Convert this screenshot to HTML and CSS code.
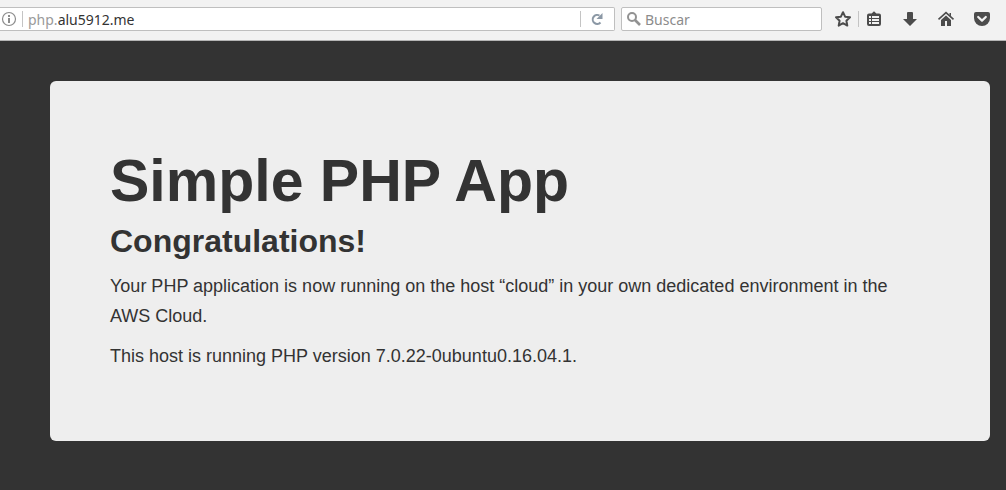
FILE: index.html
```html
<!DOCTYPE html>
<html lang="en">
<head>
<meta charset="utf-8">
<meta name="viewport" content="width=device-width, initial-scale=1">
<title>Simple PHP App</title>
<link rel="stylesheet" href="styles.css">
</head>
<body>
<header class="toolbar">
  <div class="field address">
    <button class="field-button" type="button" aria-label="Site information">
      <svg width="16" height="16" viewBox="0 0 16 16"><circle cx="8" cy="8" r="6.5" fill="none" stroke="#8c8c8c" stroke-width="1.2"/><path d="M7 4h2v2H7zM7 7h2v5H7z" fill="#8c8c8c"/></svg>
    </button>
    <span class="divider"></span>
    <label class="subdomain" for="url">php.</label>
    <input class="text-input url" id="url" type="text" value="alu5912.me">
    <span class="divider"></span>
    <button class="field-button reload" type="button" aria-label="Reload">
      <svg width="16" height="16" viewBox="0 0 16 16"><path d="M11.500 11.500A4.500 4.500 0 1 1 10.500 4.500" fill="none" stroke="#8b98a5" stroke-width="2"/><path d="M13.500 2v6H7.500z" fill="#8b98a5"/></svg>
    </button>
  </div>
  <div class="field search">
    <svg class="search-icon" width="16" height="16" viewBox="0 0 16 16"><circle cx="6" cy="6" r="4" fill="none" stroke="#929292" stroke-width="2"/><path d="M9 9l5 5" stroke="#929292" stroke-width="2.6"/></svg>
    <input class="text-input" type="search" placeholder="Buscar" aria-label="Buscar">
  </div>
  <nav class="actions" aria-label="Browser actions">
    <div class="bookmark-group">
      <button class="action" type="button" aria-label="Bookmark this page">
        <svg width="18" height="18" viewBox="0 0 18 18"><path d="M9 2.200l2.100 4.500 4.900.6-3.600 3.400.9 4.900L9 13.200l-4.300 2.400.9-4.900L2 7.300l4.900-.6z" fill="none" stroke="#4c4c4c" stroke-width="2" stroke-linejoin="round"/></svg>
      </button>
      <span class="divider"></span>
      <button class="action" type="button" aria-label="Show bookmarks">
        <svg width="18" height="18" viewBox="0 0 18 18"><path d="M4 3.4h2.6L9 1.2l2.4 2.2H14a2 2 0 0 1 2 2V14a2 2 0 0 1-2 2H4a2 2 0 0 1-2-2V5.400a2 2 0 0 1 2-2z" fill="#4c4c4c"/><path d="M4 6h2v2H4zM7 6h7v2H7zM4 9h2v2H4zM7 9h7v2H7zM4 12h2v2H4zM7 12h7v2H7z" fill="#f2f2f2"/></svg>
      </button>
    </div>
    <button class="action" type="button" aria-label="Downloads">
      <svg width="18" height="18" viewBox="0 0 18 18"><path d="M6 3q0-1 1-1h4q1 0 1 1v6h4l-7 7-7-7h4z" fill="#4c4c4c"/></svg>
    </button>
    <button class="action" type="button" aria-label="Home">
      <svg width="18" height="18" viewBox="0 0 18 18"><path d="M1.500 9.300L9 2.600l7.500 6.700" fill="none" stroke="#4c4c4c" stroke-width="1.600"/><path d="M12.500 3H14v3.400l-1.500-1.300zM4 10l5-4.500 5 4.500v6h-4v-5H8v5H4z" fill="#4c4c4c"/></svg>
    </button>
    <button class="action" type="button" aria-label="Save to Pocket">
      <svg width="18" height="18" viewBox="0 0 18 18"><path d="M3 2h12q2 0 2 2v4a8 8 0 0 1-16 0V4q0-2 2-2z" fill="#4c4c4c"/><path d="M5.200 7L9 10.600 12.800 7" fill="none" stroke="#f2f2f2" stroke-width="2.200" stroke-linecap="round" stroke-linejoin="round"/></svg>
    </button>
  </nav>
</header>
<main class="page">
  <section class="hero">
    <h1 class="title">Simple PHP App</h1>
    <h2 class="subtitle">Congratulations!</h2>
    <p class="copy">Your PHP application is now running on the host “cloud” in your own dedicated environment in the AWS Cloud.</p>
    <p class="copy">This host is running PHP version 7.0.22-0ubuntu0.16.04.1.</p>
  </section>
</main>
</body>
</html>
```
FILE: styles.css
```css
* {
  box-sizing: border-box;
}

body {
  margin: 0;
  min-height: 100vh;
  background: #333;
  color: #333;
  font-family: "Liberation Sans", Arial, sans-serif;
}

button,
input {
  margin: 0;
  padding: 0;
  border: 0;
  background: none;
  font: inherit;
}

svg {
  display: block;
}

.toolbar {
  display: flex;
  align-items: flex-start;
  padding: 7px 15px 9px 0;
  border-bottom: 1px solid #b5b5b5;
  background: #f2f2f2;
  font-family: "Noto Sans", "Open Sans", sans-serif;
  font-size: 14px;
}

.field {
  display: flex;
  align-items: center;
  min-width: 0;
  height: 24px;
  border: 1px solid #bfbfbf;
  border-radius: 2px;
  background: #fff;
}

.address {
  flex: 3;
  border-left: 0;
  border-radius: 0 2px 2px 0;
}

.field-button {
  display: flex;
  padding: 0 5px 0 1px;
}

.reload {
  padding: 0 9px 0 8px;
}

.divider {
  width: 1px;
  height: 16px;
  background: #c4c4c4;
}

.subdomain {
  padding-left: 5px;
  color: #9a9a9a;
}

.text-input {
  flex: 1;
  width: 100%;
  min-width: 0;
  height: 22px;
  color: #333;
  outline: 0;
}

.text-input::placeholder {
  color: #8c8c8c;
  opacity: 1;
}

.search {
  flex: 0 1 201px;
  gap: 3px;
  margin-left: 6px;
  padding: 0 4px;
}

.search-icon {
  flex: none;
}

.actions {
  display: flex;
  align-items: center;
  gap: 18px;
  height: 24px;
  margin-left: 12px;
}

.bookmark-group {
  display: flex;
  align-items: center;
  gap: 6px;
}

.page {
  padding: 40px 16px 40px 50px;
}

.hero {
  padding: 70px 60px 60px;
  border-radius: 6px;
  background: #eee;
}

.title,
.subtitle,
.copy {
  margin: 0 0 10px;
}

.title {
  font-size: 59px;
  line-height: 60px;
}

.subtitle {
  font-size: 32px;
  line-height: 40px;
}

.copy {
  font-size: 18px;
  line-height: 30px;
}
```
